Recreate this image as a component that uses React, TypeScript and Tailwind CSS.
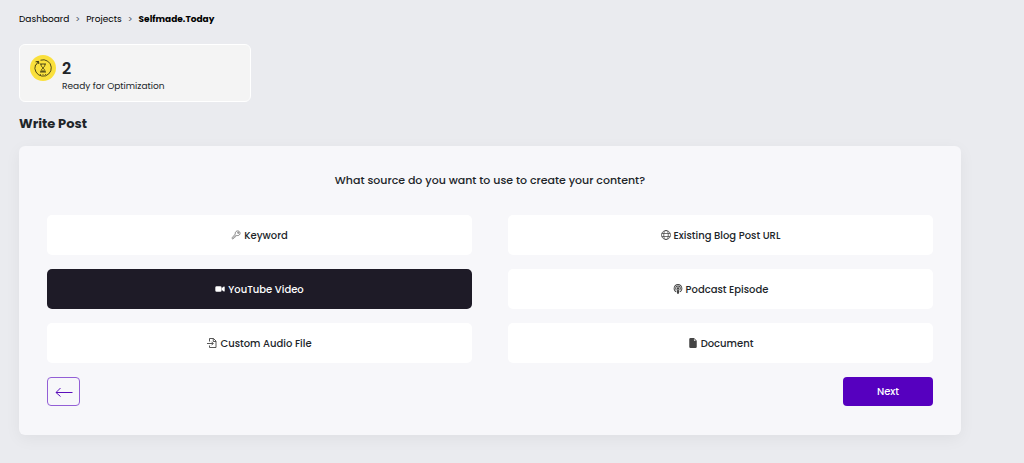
import { useState } from "react";
import { BsFileEarmarkFill } from "react-icons/bs";
import { FaPodcast } from "react-icons/fa";
import { IoKeyOutline, IoVideocam } from "react-icons/io5";

const GlobeIcon = ({ className }: { className?: string }) => (
	<svg viewBox="0 0 20 20" className={className} fill="none" stroke="currentColor" strokeWidth="1.5" aria-hidden="true">
		<circle cx="10" cy="10" r="9" />
		<ellipse cx="10" cy="10" rx="4.5" ry="9" />
		<path d="M1.5 7h17M1.5 13h17" />
	</svg>
);

const AudioFileIcon = ({ className }: { className?: string }) => (
	<svg viewBox="0 0 20 20" className={className} fill="none" stroke="currentColor" strokeWidth="1.8" aria-hidden="true">
		<path d="M5 7V1h8l5 5v13H5v-4M12.5 1v6H18" />
		<path d="M0 11h12M9 7.5l3.5 3.5L9 14.5" />
	</svg>
);

const HourglassIcon = () => (
	<svg viewBox="0 0 26 26" className="size-[26px] shrink-0" fill="none" stroke="#3d3812" aria-hidden="true">
		<circle cx="13" cy="13" r="13" fill="#fae03c" stroke="none" />
		<path d="M10.5 5.2a8.2 8.2 0 1 1-5 4.7" strokeWidth=".9" />
		<path d="M5.5 10.5L8.5 6.5M5.6 6.8l3-.4.2 2.6" strokeWidth="1" />
		<path d="M10 9h6M10 17h6M11 9c0 2.4 1.2 3 2 4-.8 1-2 1.6-2 4M15 9c0 2.4-1.2 3-2 4 .8 1 2 1.6 2 4" strokeWidth=".9" />
		<path d="M11.8 16.5l1.2-1.2 1.2 1.2z" fill="#3d3812" strokeWidth=".4" />
		<path d="M10 19.5h1M12.5 19.5h1M15 19.5h1" strokeWidth=".7" />
	</svg>
);

const sources = [
	{ name: "Keyword", Icon: IoKeyOutline },
	{ name: "Existing Blog Post URL", Icon: GlobeIcon },
	{ name: "YouTube Video", Icon: IoVideocam },
	{ name: "Podcast Episode", Icon: FaPodcast },
	{ name: "Custom Audio File", Icon: AudioFileIcon },
	{ name: "Document", Icon: BsFileEarmarkFill },
];

const App = () => {
	const [source, setSource] = useState("YouTube Video");

	return (
		<main className="min-h-screen bg-[#eaebef] pt-3 pb-7 pl-[19px] pr-[63px] font-[Poppins,Inter,sans-serif] text-[#212529]">
			<nav aria-label="Breadcrumb" className="flex items-center gap-[6px] text-[9px] leading-[14px] text-black">
				<a href="#dashboard">Dashboard</a>
				<span className="text-gray-600">&gt;</span>
				<a href="#projects">Projects</a>
				<span className="text-gray-600">&gt;</span>
				<span className="font-bold">Selfmade.Today</span>
			</nav>

			<section className="mt-[18px] flex w-[232px] gap-[6px] rounded-md border border-white bg-[#f4f4f4] px-[10px] pt-[10px] pb-2">
				<HourglassIcon />
				<div className="pt-1">
					<p className="text-base leading-5 font-semibold">2</p>
					<p className="text-[9px] leading-[14px]">Ready for Optimization</p>
				</div>
			</section>

			<h1 className="mt-3 text-[13px] leading-5 font-bold">Write Post</h1>

			<section className="mt-3 rounded-md bg-[#f7f7fa] px-7 pt-7 pb-[29px] shadow-[0_4px_16px_rgba(0,0,0,0.05)]">
				<h2 className="text-center text-[11px] leading-3 font-medium">What source do you want to use to create your content?</h2>
				<div className="mt-[29px] grid grid-cols-2 gap-x-9 gap-y-[14px]">
					{sources.map(({ name, Icon }) => (
						<button
							key={name}
							type="button"
							aria-pressed={source === name}
							onClick={() => setSource(name)}
							className={`flex h-10 items-center justify-center gap-[3px] rounded-[5px] text-[10px] font-medium ${source === name ? "bg-[#1e1b27] text-white" : "bg-white"}`}
						>
							<Icon className={`size-[10px] ${source === name ? "text-white" : "text-[#444]"}`} aria-hidden="true" />
							{name}
						</button>
					))}
				</div>
				<div className="mt-[14px] flex items-center justify-between">
					<button type="button" aria-label="Back" className="flex h-[29px] w-[33px] items-center justify-center rounded border border-[#935fd6] text-[#5b0dbb]">
						<svg viewBox="0 0 18 10" className="h-[10px] w-[18px]" fill="none" stroke="currentColor" aria-hidden="true">
							<path d="M17.5 5.5H1M5.5 1L1 5.5 5.5 9.5" />
						</svg>
					</button>
					<button type="button" className="h-[29px] w-[90px] rounded bg-[#5600bf] text-[10px] font-medium text-white">Next</button>
				</div>
			</section>
		</main>
	);
};

export default App;
